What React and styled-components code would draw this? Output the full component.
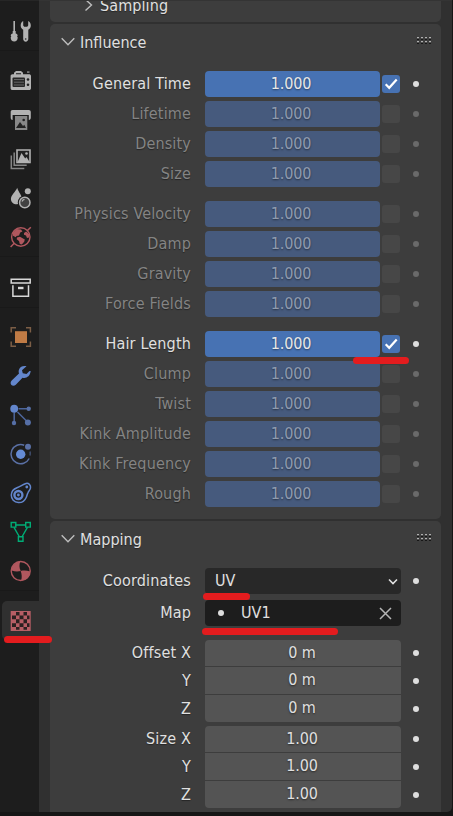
import React from "react";
import styled, { createGlobalStyle } from "styled-components";

const Global = createGlobalStyle`
  * { box-sizing: border-box; }
  body {
    margin: 0;
    background: #161616;
    overflow: hidden;
    font-family: "DejaVu Sans Condensed", "DejaVu Sans", sans-serif;
    font-stretch: condensed;
    font-size: 16px;
    color: #e0e0e0;
  }
`;

const Editor = styled.div`
  position: relative;
  display: flex;
  width: 453px;
  height: 816px;
  overflow: hidden;
  background: #161616;
`;

const TabBar = styled.nav`
  display: flex;
  flex-direction: column;
  width: 39px;
  height: 812px;
  padding-top: 10px;
  background: #1d1d1d;
  border-top: 1px solid #262626;
`;

const Tab = styled.div`
  display: flex;
  align-items: center;
  flex: none;
  height: 39px;
  margin-left: 2px;
  padding-left: 8px;
  border-radius: 5px 0 0 5px;
  background: ${(p) => (p.$active ? "#303030" : "transparent")};
`;

const TabGap = styled.div`
  flex: none;
  height: ${(p) => p.$size}px;
  border-top: 1px solid #191919;
`;

const Icon = styled.svg`
  display: block;
  width: 22px;
  height: 22px;
  overflow: visible;
`;

const Region = styled.main`
  display: flex;
  flex-direction: column;
  gap: 2px;
  width: 413px;
  height: 812px;
  padding: 0 11px;
  background: #303030;
  border-top: 1px solid #343434;
  border-bottom-right-radius: 5px;
`;

const Panel = styled.section`
  flex: none;
  height: ${(p) => p.$height}px;
  background: #3d3d3d;
  border-radius: ${(p) => p.$radius || "5px"};
  overflow: hidden;
`;

const PanelHeader = styled.header`
  display: flex;
  align-items: center;
  height: 36px;
  margin-bottom: 11px;
  padding: 0 9px 0 11px;
  text-shadow: 0 1px 1px #0006;
`;

const Title = styled.h2`
  flex: 1;
  margin: 1px 0 0 5px;
  font: inherit;
`;

const SubHeader = styled.div`
  display: flex;
  align-items: center;
  gap: 7px;
  height: 22px;
  margin-top: -7px;
  padding-left: 34px;
  letter-spacing: 0.1px;
  text-shadow: 0 1px 1px #0006;
`;

const Stack = styled.div`
  display: flex;
  flex-direction: column;
  gap: ${(p) => p.$gap || 0}px;
`;

const Row = styled.div`
  display: grid;
  grid-template-columns: 141px 196px 10px;
  column-gap: 14px;
  align-items: center;
  height: ${(p) => p.$height || 26}px;
  color: ${(p) => (p.$off ? "#848484" : "#e0e0e0")};
  line-height: 26px;
`;

const Label = styled.label`
  text-align: right;
  white-space: nowrap;
  letter-spacing: 0.16px;
  text-shadow: 0 1px 1px #0006;
`;

const Control = styled.div`
  display: flex;
  align-items: center;
  gap: 2px;
`;

const Slider = styled.div`
  width: 175px;
  height: 26px;
  border-radius: 4px;
  background: ${(p) => (p.$off ? "#465a7d" : "#4772b3")};
  color: ${(p) => (p.$off ? "#8f9baf" : "#e8e8e8")};
  text-align: center;
  padding-right: 3px;
  letter-spacing: -0.15px;
  text-shadow: 0 1px 2px #0007;
`;

const Check = styled.div`
  width: 18px;
  height: 18px;
  border-radius: 3px;
  background: ${(p) => (p.$off ? "#474747" : "#4772b3")};
`;

const Dot = styled.i`
  width: 6px;
  height: 6px;
  margin-left: ${(p) => (p.$inline ? "2px" : "-2px")};
  border-radius: 50%;
  background: ${(p) => (p.$off ? "#6a6a6a" : "#dedede")};
`;

const Dropdown = styled.div`
  display: flex;
  align-items: center;
  justify-content: space-between;
  width: 196px;
  height: 26px;
  padding: 0 2px 0 10px;
  border-radius: 4px;
  background: #282828;
`;

const DataField = styled(Dropdown)`
  justify-content: flex-start;
  gap: 17px;
  padding: 0 9px 0 11px;
  background: #1d1d1d;

  svg { margin-left: auto; }
`;

const NumberField = styled.div`
  width: 196px;
  height: ${(p) => p.$height}px;
  line-height: 26px;
  padding-right: 2px;
  background: #545454;
  border-radius: ${(p) => p.$radius};
  text-align: center;
  letter-spacing: -0.1px;
  text-shadow: 0 1px 2px #0008;
`;

const RedStroke = styled.div`
  position: absolute;
  left: ${(p) => p.$x}px;
  top: ${(p) => p.$y}px;
  width: ${(p) => p.$w}px;
  height: 7px;
  border-radius: 4px;
  background: #e31c1e;
`;

const Chevron = () => (
  <svg width="14" height="10" viewBox="0 0 14 10" fill="none" stroke="#bdbdbd" strokeWidth="1.4">
    <path d="M.7 1.2 7 7.8l6.3-6.6" />
  </svg>
);

const GripSvg = styled.svg`
  margin-top: -3px;
`;

const Grip = () => (
  <GripSvg width="15" height="7" viewBox="0 0 15 7">
    {[0, 4, 8, 12].map((x) =>
      [0, 4].map((y) => (
        <g key={`${x}-${y}`}>
          <rect x={x} y={y + 1} width="2" height="2" fill="#161616" />
          <rect x={x} y={y} width="2" height="1.4" fill="#b0b0b0" />
        </g>
      ))
    )}
  </GripSvg>
);

const G = "#b2b2b2";
const B = "#6386cc";
const R = "#b0575e";

const icons = {
  tool: (
    <>
      <path d="M4.2 1v12" stroke={G} strokeWidth="1.6" />
      <path d="M2.7 11h3v2.4c1.2.4 2 1.2 2 2l-.6.8.6 1.2c0 2.4-1.4 4-3.5 4S.7 19.8.7 17.4l.6-1.2-.6-.8c0-.8.8-1.6 2-2z" fill={G} />
      <path d="M13.2 1v4.600l1 1.200h3l1-1.200V1c1.600.9 2.600 2.400 2.600 4.400 0 2-1 3.500-2.500 4.400v9.300c0 1.500-1.100 2.600-2.600 2.600s-2.500-1.100-2.500-2.600V9.800c-1.500-.9-2.500-2.400-2.500-4.400 0-2 .9-3.500 2.500-4.400z" fill={G} />
      <circle cx="15.700" cy="19" r=".8" fill="#222" />
    </>
  ),
  render: (
    <>
      <path fillRule="evenodd" d="M2.5 4.200H4V2.800L6 1h5l2 1.800v1.400h6c1 0 2 .6 2 1.800v12.200c0 1-.8 1.800-1.800 1.800H2.400c-1 0-1.800-.8-1.800-1.800V6c0-1 .8-1.800 1.900-1.800zM6 3.300v1h5v-1z" fill={G} />
      <rect x="2.500" y="7.500" width="12.500" height="9.500" rx="1" fill="#272727" />
      <path d="M4 9.500h10M4 12.200h10M4 15h10" stroke="#646464" strokeWidth="1" />
      <circle cx="18" cy="9.500" r="1.300" fill="#222" />
      <circle cx="18" cy="14.800" r="1.300" fill="#222" />
      <rect x="17" y="1.200" width="2.500" height="1.800" fill="#777" />
    </>
  ),
  output: (
    <>
      <path d="M2.500 1h16.300c1.200 0 2 .8 2 2v5.500c0 1.500-.6 2.500-2 2.500V6H2.600v5C1.200 11 .7 10 .7 8.500V3c0-1.200.6-2 1.800-2z" fill={G} />
      <path d="M5 7h12.300v14H5z" fill="#888" />
      <path d="m6 19 4-6 3 4 1.300-1.200L16 19z" fill="#222" />
      <circle cx="13.700" cy="11" r="1.300" fill="#222" />
    </>
  ),
  viewLayer: (
    <>
      <path d="M7 2h13v12.500H7z" fill="#222" stroke={G} strokeWidth="1.600" />
      <path d="m8 13 3.500-8 3.700 5.500L16.500 9l2.500 4v1H8z" fill={G} />
      <circle cx="16.500" cy="5.500" r="1.300" fill={G} />
      <path d="M4.200 4.500v12.700h12.500M1.300 7.500v13h13" fill="none" stroke="#858585" strokeWidth="1.500" />
    </>
  ),
  scene: (
    <>
      <path d="M7.200.8c.7 4 6 8.600 4.600 12.600-.7 2.200-2.500 3.800-5 3.800-3.500 0-5.900-2.400-5.900-5.300C1 8.200 5.800 4.500 7.200.8z" fill={G} />
      <circle cx="17.800" cy="4.200" r="3" fill={G} />
      <circle cx="14.800" cy="15.500" r="7" fill="#1d1d1d" />
      <circle cx="14.800" cy="15.500" r="5.200" fill="#414141" stroke={G} strokeWidth="1.500" />
      <path d="M12 14.500c.4-1.200 1.200-2 2.500-2.200" fill="none" stroke={G} strokeWidth="1.200" />
    </>
  ),
  world: (
    <>
      <circle cx="10.800" cy="11" r="9.200" fill="none" stroke={R} strokeWidth="1.400" />
      <path d="m17.200 4.800 3.600-3.600M.6 21l3.600-3.800" stroke={R} strokeWidth="1.500" />
      <path d="M3 6.500 6.500 3l4.500.5 1.400 2-2.200 1L9 9.500 6.500 10l-.7 1.200L3 9.700zM7 11.500l3-.7 4.800 2.800-.6 2.200-2.400 2.700-2-.6-.8-3-2.300-1.600zM14 7l2.200-1.500L19 8v3.600l-2 .5-1-2.600-2-.8z" fill={R} />
    </>
  ),
  collection: (
    <g fill="none" stroke="#d8d8d8">
      <path d="M1.200 2.300h19v3.700h-19z" strokeWidth="1.500" />
      <path d="M2.900 8.300v10.900h15.600V8.300" strokeWidth="1.500" />
      <path d="M8 11h5.500" strokeWidth="2.400" />
    </g>
  ),
  object: (
    <>
      <path d="M5 5.200h12V17H5z" fill="#c07b45" />
      <path d="M1.200 6.500V1.700H6M16 1.700h4.400v4.800M20.400 15.500v4.800H16M6 20.300H1.200v-4.800" fill="none" stroke="#7c5e46" strokeWidth="1.500" />
    </>
  ),
  modifier: (
    <path d="M16.500 1.200c-3.500-.9-7 .7-7.700 4-.3 1.400-.1 2.400.2 3.300L1.700 15.600c-1.600 1.600-1.200 3.500-.3 4.400s2.900 1.300 4.400-.3l6.700-7c3.700 1 7.600-1.200 8.200-6.600l-1.200-.2-3 3-3.700-.6L12 5.200z" fill={B} />
  ),
  particles: (
    <>
      <path d="M8.500 4.800H20M4.200 8v11M7.500 8l10.300 10.300" stroke="#4d669c" strokeWidth="1.500" />
      <circle cx="4.200" cy="4.700" r="3.900" fill={B} />
      <circle cx="18.700" cy="4.700" r="2.200" fill="#566fa6" />
      <circle cx="4" cy="19" r="2.200" fill="#566fa6" />
      <circle cx="17.900" cy="18.400" r="3" fill="#566fa6" />
    </>
  ),
  physics: (
    <>
      <path d="M14.200 2.200A9.600 9.600 0 1 0 19.200 15.500" fill="none" stroke="#5a70a5" strokeWidth="1.500" />
      <path d="M20 8.500q.5 2 0 4" fill="none" stroke="#46567c" strokeWidth="1.300" />
      <circle cx="10.700" cy="11.200" r="4.700" fill="#658bd4" />
      <circle cx="18" cy="3.800" r="3" fill="#5a70a5" />
    </>
  ),
  constraints: (
    <>
      <path d="M16 1.500C18.500.8 21 3 20.500 6c-.3 1.700-1.700 3-2.600 4.800-.8 1.400-.9 3-1.700 4.700-1.500 3.400-4.500 5.300-7.800 5.100-4.300-.3-7.200-3.600-7.100-7.500.1-3.400 2.500-6.100 5.700-7.300C10.500 4.500 13 2.300 16 1.500z" fill="none" stroke={B} strokeWidth="1.500" />
      <circle cx="8.400" cy="13" r="4" fill="#1d1d1d" stroke={B} strokeWidth="2.400" />
      <circle cx="8.400" cy="13" r="1.400" fill={B} />
      <circle cx="16.800" cy="5" r="1.400" fill={B} />
    </>
  ),
  data: (
    <g fill="none" stroke="#00ad76" strokeWidth="1.400">
      <path d="M5.500 4h10M4 6.300l5.200 9.200M17.400 6.300l-5.200 9.200" />
      <path d="M1.200 1.500h4.600v4.600H1.200zM15.700 1.500h4.600v4.600h-4.600zM8.400 15.700H13v4.600H8.400z" />
    </g>
  ),
  material: (
    <>
      <circle cx="10.700" cy="11" r="9.500" fill="#1d1d1d" stroke={R} strokeWidth="1.400" />
      <path d="M10.700 11c-2.500.7-6 .7-9.200-.5C1.700 5.500 5.500 1.500 10.500 1.200c-1.500 3-1.400 6.500.2 9.800zM10.700 11c2.800-.7 6-.7 9.400.5-.3 4.800-4 8.800-9 9.200 1-3 .8-6.500-.4-9.700z" fill={R} />
    </>
  ),
  texture: (
    <>
      <path d="M.7 1h20v20H.7z" fill="#b65e65" />
      <path
        fill="#2a2020"
        d="M6 2h3.500v3.500H6zM13.500 2H17v3.500h-3.500zM2 5.500h4V9.300H2zM9.500 5.500h4v3.800h-4zM17 5.500h2.500v3.800H17zM6 9.300h3.500v3.900H6zM13.500 9.300H17v3.900h-3.500zM2 13.200h4V17H2zM9.500 13.200h4V17h-4zM17 13.200h2.500V17H17zM6 17h3.500v2.800H6zM13.500 17H17v2.800h-3.500z"
      />
    </>
  ),
};

const tabGroups = [
  { gap: 11, tabs: ["tool"] },
  { gap: 12, tabs: ["render", "output", "viewLayer", "scene", "world"] },
  { gap: 10, tabs: ["collection"] },
  { gap: 11, tabs: ["object", "modifier", "particles", "physics", "constraints", "data", "material"] },
  { gap: 0, tabs: ["texture"] },
];

const influences = [
  ["General Time", "Lifetime", "Density", "Size"],
  ["Physics Velocity", "Damp", "Gravity", "Force Fields"],
  ["Hair Length", "Clump", "Twist", "Kink Amplitude", "Kink Frequency", "Rough"],
];
const enabled = ["General Time", "Hair Length"];

const vectors = [
  { labels: ["Offset X", "Y", "Z"], value: "0 m" },
  { labels: ["Size X", "Y", "Z"], value: "1.00" },
];
const corners = ["4px 4px 0 0", "0", "0 0 4px 4px"];

const NumberStack = styled(Stack)`
  margin-top: ${(p) => p.$top}px;
`;

function InfluenceRow({ name }) {
  const off = !enabled.includes(name);
  return (
    <Row $off={off}>
      <Label>{name}</Label>
      <Control>
        <Slider $off={off}>1.000</Slider>
        <Check $off={off}>
          {!off && (
            <svg width="18" height="18" viewBox="0 0 18 18" fill="none" stroke="#fff" strokeWidth="2.200">
              <path d="m3.700 9.300 3.500 3.500 7.500-8.300" />
            </svg>
          )}
        </Check>
      </Control>
      <Dot $off={off} />
    </Row>
  );
}

export default function App() {
  return (
    <Editor>
      <Global />
      <TabBar>
        {tabGroups.map(({ gap, tabs }) => (
          <React.Fragment key={tabs[0]}>
            {tabs.map((name) => (
              <Tab key={name} $active={name === "texture"}>
                <Icon viewBox="0 0 22 22">{icons[name]}</Icon>
              </Tab>
            ))}
            {gap > 0 && <TabGap $size={gap} />}
          </React.Fragment>
        ))}
      </TabBar>
      <Region>
        <Panel $height={21} $radius="0 0 5px 5px">
          <SubHeader>
            <svg width="9" height="12" viewBox="0 0 9 12" fill="none" stroke="#bdbdbd" strokeWidth="1.400">
              <path d="m1.500.5 6 5.500-6 5.500" />
            </svg>
            Sampling
          </SubHeader>
        </Panel>
        <Panel $height={495}>
          <PanelHeader>
            <Chevron />
            <Title>Influence</Title>
            <Grip />
          </PanelHeader>
          <Stack $gap={14}>
            {influences.map((group) => (
              <Stack $gap={4} key={group[0]}>
                {group.map((name) => (
                  <InfluenceRow key={name} name={name} />
                ))}
              </Stack>
            ))}
          </Stack>
        </Panel>
        <Panel $height={291} $radius="5px 5px 0 0">
          <PanelHeader>
            <Chevron />
            <Title>Mapping</Title>
            <Grip />
          </PanelHeader>
          <Stack $gap={6}>
            <Row>
              <Label>Coordinates</Label>
              <Dropdown>
                UV
                <svg width="12" height="8" viewBox="0 0 12 8" fill="none" stroke="#e0e0e0" strokeWidth="1.600">
                  <path d="m2 2.500 4 4 4-4" />
                </svg>
              </Dropdown>
              <Dot />
            </Row>
            <Row>
              <Label>Map</Label>
              <DataField>
                <Dot $inline />
                UV1
                <svg width="13" height="13" viewBox="0 0 13 13" stroke="#b5b5b5" strokeWidth="1.500">
                  <path d="m1 1 11 11M12 1 1 12" />
                </svg>
              </DataField>
            </Row>
          </Stack>
          {vectors.map(({ labels, value }, v) => (
            <NumberStack $gap={1} $top={v === 0 ? 14 : 4} key={value}>
              {labels.map((label, i) => (
                <Row key={label} $height={i === 0 ? 26 : 27}>
                  <Label>{label}</Label>
                  <NumberField $height={i === 0 ? 26 : 27} $radius={corners[i]}>
                    {value}
                  </NumberField>
                  <Dot />
                </Row>
              ))}
            </NumberStack>
          ))}
        </Panel>
      </Region>
      <RedStroke $x={353} $y={357} $w={56} />
      <RedStroke $x={203} $y={593} $w={47} />
      <RedStroke $x={202} $y={628} $w={136} />
      <RedStroke $x={4} $y={636} $w={48} />
    </Editor>
  );
}
